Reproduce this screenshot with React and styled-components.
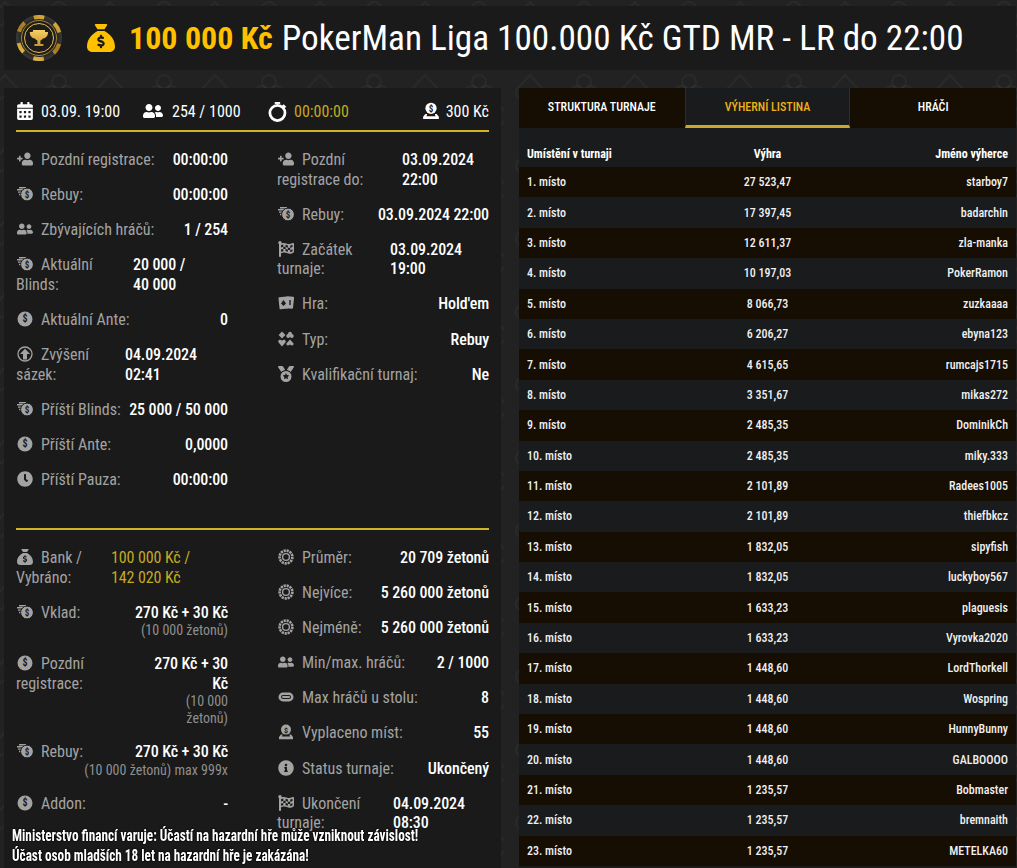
import styled, { createGlobalStyle } from 'styled-components'
import {
  FaCalendarAlt,
  FaClock,
  FaFlagCheckered,
  FaInfoCircle,
  FaUserFriends,
  FaUserPlus,
} from 'react-icons/fa'
import { FaSackDollar, FaMedal } from 'react-icons/fa6'

const suitPattern = `url("data:image/svg+xml,%3Csvg xmlns='http://www.w3.org/2000/svg' width='105' height='73' viewBox='0 0 105 73'%3E%3Cg fill='none' stroke='%23ffffff' stroke-opacity='.03' stroke-width='2'%3E%3Cpath d='M13 16 L26 2 L39 16 C44 26 31 29 26 22 C21 29 8 26 13 16Z'/%3E%3Ccircle cx='80' cy='9' r='7'/%3E%3Ccircle cx='73' cy='20' r='7'/%3E%3Ccircle cx='87' cy='20' r='7'/%3E%3Cpath d='M32 44 L45 60 L58 44 C58 34 49 34 45 41 C41 34 32 34 32 44Z'/%3E%3Cpath d='M98 30 L110 43 L98 56 L86 43Z'/%3E%3C/g%3E%3C/svg%3E")`

const GlobalStyle = createGlobalStyle`
  html, body {
    margin: 0;
    height: 100%;
    overflow: hidden;
  }
  body {
    background-color: #222222;
    background-image: ${suitPattern};
    background-position: -21px 0;
    font-family: 'Roboto Condensed', 'Liberation Sans Narrow', Roboto, sans-serif;
    font-stretch: 75%;
    color: #fff;
  }
`

const Page = styled.div`
  padding: 6px 1px 0 4px;
  height: 868px;
  box-sizing: border-box;
`

const Header = styled.header`
  display: flex;
  align-items: center;
  height: 64px;
  background: #1a1a1a;
  padding-left: 12px;
  margin-bottom: 18px;
`

const Logo = styled.svg`
  width: 46px;
  height: 46px;
  flex: none;
  margin-right: 25px;
`

const Bag = styled(FaSackDollar)`
  width: 28px;
  height: 28px;
  color: #ffc000;
  margin-right: 14px;
  flex: none;
`

const Amount = styled.span`
  font-size: 32px;
  font-weight: 700;
  color: #ffc000;
  margin-right: 9px;
  white-space: nowrap;
`

const Title = styled.h1`
  margin: 0;
  font-size: 35.2px;
  font-weight: 400;
  white-space: nowrap;
`

const Columns = styled.div`
  display: grid;
  grid-template-columns: 497px 497px;
  column-gap: 18px;
  align-items: start;
`

const Panel = styled.section`
  background: #1a1a1a;
  padding: 0 12px 0 12px;
  height: 780px;
  overflow: hidden;
`

const StatBar = styled.div`
  display: flex;
  align-items: center;
  height: 38px;
  padding-top: 4px;
  border-bottom: 2px solid #d1b527;
  font-size: 16px;
  margin-bottom: 18px;
`

const Stat = styled.div`
  display: flex;
  align-items: center;
  gap: ${(p) => p.$gap || 7}px;
  width: ${(p) => p.$width || 'auto'};
  margin-left: ${(p) => (p.$push ? 'auto' : 0)};
  color: ${(p) => (p.$gold ? '#c4ab22' : '#fff')};
  white-space: nowrap;
  svg {
    color: #fff;
    flex: none;
  }
`

const InfoGrid = styled.div`
  display: grid;
  grid-template-columns: 212px 212px;
  column-gap: 49px;
  height: ${(p) => p.$height}px;
  align-content: start;
  ${(p) => (p.$rule ? 'border-bottom: 2px solid #d1b527; margin-bottom: 18px;' : '')}
`

const InfoColumn = styled.div`
  display: flex;
  flex-direction: column;
`

const Row = styled.div`
  display: flex;
  justify-content: space-between;
  font-size: 16px;
  line-height: 19.6px;
  margin-bottom: 15.5px;
`

const Label = styled.div`
  color: #a3a3a3;
  flex: ${(p) => (p.$width ? '1 1 0' : 'none')};
  svg {
    width: 16px;
    height: 16px;
    margin: 0 8px -2px 1px;
    color: #a3a3a3;
  }
`

const Value = styled.div`
  color: ${(p) => (p.$gold ? '#c4ab22' : '#fff')};
  text-align: ${(p) => (p.$left ? 'left' : 'right')};
  font-weight: ${(p) => (p.$gold ? 400 : 500)};
  letter-spacing: -0.1px;
  width: ${(p) => (p.$width ? `${p.$width}px` : 'auto')};
  flex: none;
`

const Note = styled.div`
  font-size: 14px;
  line-height: 16.5px;
  font-weight: 400;
  letter-spacing: 0;
  color: #8f8f8f;
`

const Warning = styled.div`
  position: fixed;
  left: 12px;
  bottom: 0;
  font-size: 16px;
  line-height: 20px;
  font-weight: 700;
  color: #fff;
  padding-bottom: 2px;
  text-shadow: 0 0 2px #000, 0 0 2px #000;
  white-space: nowrap;
  transform: scaleX(0.827);
  transform-origin: left;
`

const Tabs = styled.nav`
  display: grid;
  grid-template-columns: repeat(3, 1fr);
  height: 40px;
`

const Tab = styled.div`
  display: flex;
  align-items: center;
  justify-content: center;
  font-size: 12px;
  font-weight: 500;
  box-sizing: border-box;
  background: ${(p) => (p.$active ? '#1a1b1c' : '#160e03')};
  color: ${(p) => (p.$active ? '#ecb21c' : '#fff')};
  border-bottom: 3px solid ${(p) => (p.$active ? '#c9a92a' : 'transparent')};
  border-left: 1px solid ${(p) => (p.$active ? '#2c2c2c' : 'transparent')};
  border-right: 1px solid ${(p) => (p.$active ? '#2c2c2c' : 'transparent')};
`

const Results = styled.div`
  background: #1a1b1c;
  height: 740px;
  overflow: hidden;
  padding-top: 14px;
  box-sizing: border-box;
`

const TableRow = styled.div`
  display: grid;
  grid-template-columns: 1fr 1fr 1fr;
  align-items: center;
  box-sizing: border-box;
  height: ${(p) => (p.$head ? '25px' : '30.4px')};
  padding: 0 8px ${(p) => (p.$head ? '2px' : '0')};
  font-size: 12px;
  font-weight: ${(p) => (p.$head ? 700 : 500)};
  color: ${(p) => (p.$head ? '#fff' : '#f0f0f0')};
  background: ${(p) => (p.$shade ? '#160e03' : 'transparent')};
`

const Cell = styled.div`
  text-align: ${(p) => p.$align || 'left'};
`

function Coins(props) {
  return (
    <svg viewBox="0 0 16 16" {...props}>
      <g fill="currentColor">
        <path d="M0 3h6v1.4H0zM1 5.4h4v1.4H1zM2 7.8h3v1.4H2zM2 1h7v1.4H2z" />
        <circle cx="10" cy="8.5" r="6.4" stroke="#1a1a1a" strokeWidth="1" />
      </g>
      <text x="10" y="11.6" fontSize="9" fontWeight="700" textAnchor="middle" fill="#1a1a1a">
        $
      </text>
    </svg>
  )
}

function Dollar(props) {
  return (
    <svg viewBox="0 0 16 16" {...props}>
      <circle cx="8" cy="8" r="7.5" fill="currentColor" />
      <text x="8" y="11.4" fontSize="10" fontWeight="700" textAnchor="middle" fill="#1a1a1a">
        $
      </text>
    </svg>
  )
}

function RaiseUp(props) {
  return (
    <svg viewBox="0 0 16 16" {...props}>
      <circle cx="8" cy="8" r="7" fill="none" stroke="currentColor" strokeWidth="1.3" />
      <path d="M8 2.8 13 8H10v5.4H6V8H3z" fill="currentColor" />
    </svg>
  )
}

function Cards(props) {
  return (
    <svg viewBox="0 0 16 16" {...props}>
      <rect x="1" y="2" width="9" height="12" rx="1" fill="currentColor" transform="rotate(-6 5 8)" />
      <rect x="8" y="1.5" width="7.5" height="12" rx="1" fill="currentColor" transform="rotate(6 12 8)" />
      <path d="M5.5 5 8 8.5 5.5 11 3 8.5z" fill="#1a1a1a" />
      <path d="M12 5v5" stroke="#1a1a1a" strokeWidth="1.4" />
    </svg>
  )
}

function Suits(props) {
  return (
    <svg viewBox="0 0 16 16" {...props}>
      <g fill="currentColor">
        <path d="M4 0.5 7.4 4 4 7.5 0.6 4z" />
        <circle cx="12" cy="2.6" r="1.9" />
        <circle cx="10.2" cy="5" r="1.9" />
        <circle cx="13.8" cy="5" r="1.9" />
        <path d="M4 15.4 0.4 11.2C-.4 9 2.6 7.8 4 9.8 5.4 7.8 8.4 9 7.6 11.2z" />
        <path d="M12 8.4 15.6 12.6C16 14.6 13.4 15 12 13.4 10.6 15 8 14.6 8.4 12.6z" />
      </g>
    </svg>
  )
}

function Chip(props) {
  return (
    <svg viewBox="0 0 16 16" {...props}>
      <circle cx="8" cy="8" r="6.4" fill="none" stroke="currentColor" strokeWidth="2.6" strokeDasharray="2.2 .8" />
      <circle cx="8" cy="8" r="3.4" fill="none" stroke="currentColor" strokeWidth="1.4" />
    </svg>
  )
}

function PokerTable(props) {
  return (
    <svg viewBox="0 0 16 16" {...props}>
      <rect x=".5" y="3.6" width="15" height="8.8" rx="4.4" fill="currentColor" />
      <rect x="3" y="6" width="10" height="4" rx="2" fill="#1a1a1a" />
      <rect x="4" y="7" width="8" height="2" rx="1" fill="currentColor" />
    </svg>
  )
}

function Payout(props) {
  return (
    <svg viewBox="0 0 16 16" {...props}>
      <circle cx="8" cy="5.6" r="5" fill="currentColor" />
      <text x="8" y="8.6" fontSize="8" fontWeight="700" textAnchor="middle" fill="#1a1a1a">
        $
      </text>
      <path d="M3 10.6h1.6L4 12.6h8l-.6-2H13l2 2.4v2.2H1V13z" fill="currentColor" />
    </svg>
  )
}

function Stopwatch(props) {
  return (
    <svg viewBox="0 0 20 20" {...props}>
      <circle cx="9" cy="11.4" r="7.2" fill="none" stroke="currentColor" strokeWidth="2.6" />
      <path d="M6.4 1h5.2v1.8H6.4z" fill="currentColor" />
      <path d="m14.8 3 2.6 2.4-1.6 1.6-2.5-2.4z" fill="currentColor" />
    </svg>
  )
}

function ChipLogo() {
  return (
    <Logo viewBox="0 0 46 46">
      <defs>
        <linearGradient id="gold" x1="0" y1="0" x2="1" y2="1">
          <stop offset="0" stopColor="#f4cf5a" />
          <stop offset=".5" stopColor="#a8781c" />
          <stop offset="1" stopColor="#e8bd48" />
        </linearGradient>
        <linearGradient id="cup" x1="0" y1="0" x2="0" y2="1">
          <stop offset="0" stopColor="#f6cf62" />
          <stop offset="1" stopColor="#c9962e" />
        </linearGradient>
        <radialGradient id="felt">
          <stop offset="0" stopColor="#1a1a1a" />
          <stop offset=".7" stopColor="#1f1d1a" />
          <stop offset="1" stopColor="#3a3a3a" />
        </radialGradient>
      </defs>
      <circle cx="23" cy="23" r="23" fill="url(#felt)" />
      <circle
        cx="23"
        cy="23"
        r="21"
        fill="none"
        stroke="url(#gold)"
        strokeWidth="4"
        strokeDasharray="10.5 11.49"
        transform="rotate(-104.3 23 23)"
      />
      <circle cx="23" cy="23" r="17.5" fill="none" stroke="#a8842e" strokeWidth="1" />
      <circle cx="23" cy="23" r="14.5" fill="none" stroke="#e2bc5a" strokeWidth="1" />
      <path
        d="M17 15h12v2h3c0 4-2 6-5 6.6-.7 1-1.6 1.6-2.6 1.8V29h3v2h-9v-2h3v-3.6c-1-.2-1.9-.8-2.6-1.8-3-.6-5-2.6-5-6.6h3z"
        fill="url(#cup)"
      />
    </Logo>
  )
}

const leftRows = [
  { icon: FaUserPlus, flip: true, label: 'Pozdní registrace:', value: '00:00:00' },
  { icon: Coins, label: 'Rebuy:', value: '00:00:00' },
  { icon: FaUserFriends, label: 'Zbývajících hráčů:', value: '1 / 254' },
  { icon: Coins, label: 'Aktuální Blinds:', value: '20\u00a0000 / 40\u00a0000', wrap: 95 },
  { icon: Dollar, label: 'Aktuální Ante:', value: '0' },
  { icon: RaiseUp, label: 'Zvýšení sázek:', value: '04.09.2024 02:41', wrap: 103 },
  { icon: Coins, label: 'Příští Blinds:', value: '25 000 / 50 000' },
  { icon: Dollar, label: 'Příští Ante:', value: '0,0000' },
  { icon: FaClock, label: 'Příští Pauza:', value: '00:00:00' },
]

const rightRows = [
  { icon: FaUserPlus, flip: true, label: 'Pozdní registrace do:', value: '03.09.2024 22:00', wrap: 87 },
  { icon: Coins, label: 'Rebuy:', value: '03.09.2024 22:00' },
  { icon: FaFlagCheckered, label: 'Začátek turnaje:', value: '03.09.2024 19:00', wrap: 99 },
  { icon: Cards, label: 'Hra:', value: "Hold'em" },
  { icon: Suits, label: 'Typ:', value: 'Rebuy' },
  { icon: FaMedal, label: 'Kvalifikační turnaj:', value: 'Ne' },
]

const bottomRight = [
  { icon: Chip, label: 'Průměr:', value: '20 709 žetonů' },
  { icon: Chip, label: 'Nejvíce:', value: '5 260 000 žetonů' },
  { icon: Chip, label: 'Nejméně:', value: '5 260 000 žetonů' },
  { icon: FaUserFriends, label: 'Min/max. hráčů:', value: '2 / 1000' },
  { icon: PokerTable, label: 'Max hráčů u stolu:', value: '8' },
  { icon: Payout, label: 'Vyplaceno míst:', value: '55' },
  { icon: FaInfoCircle, label: 'Status turnaje:', value: 'Ukončený' },
  { icon: FaFlagCheckered, label: 'Ukončení turnaje:', value: '04.09.2024 08:30', wrap: 96 },
]

const winners = [
  ['27 523,47', 'starboy7'],
  ['17 397,45', 'badarchin'],
  ['12 611,37', 'zla-manka'],
  ['10 197,03', 'PokerRamon'],
  ['8 066,73', 'zuzkaaaa'],
  ['6 206,27', 'ebyna123'],
  ['4 615,65', 'rumcajs1715'],
  ['3 351,67', 'mikas272'],
  ['2 485,35', 'DominikCh'],
  ['2 485,35', 'miky.333'],
  ['2 101,89', 'Radees1005'],
  ['2 101,89', 'thiefbkcz'],
  ['1 832,05', 'sipyfish'],
  ['1 832,05', 'luckyboy567'],
  ['1 633,23', 'plaguesis'],
  ['1 633,23', 'Vyrovka2020'],
  ['1 448,60', 'LordThorkell'],
  ['1 448,60', 'Wospring'],
  ['1 448,60', 'HunnyBunny'],
  ['1 448,60', 'GALBOOOO'],
  ['1 235,57', 'Bobmaster'],
  ['1 235,57', 'bremnaith'],
  ['1 235,57', 'METELKA60'],
]

function InfoRow({ icon: Icon, flip, label, value, wrap }) {
  return (
    <Row>
      <Label $width={wrap}>
        <Icon style={flip ? { transform: 'scaleX(-1)' } : undefined} />
        {label}
      </Label>
      <Value $left={Boolean(wrap)} $width={wrap}>
        {value}
      </Value>
    </Row>
  )
}

function App() {
  return (
    <>
      <GlobalStyle />
      <Page>
        <Header>
          <ChipLogo />
          <Bag />
          <Amount>100 000 Kč</Amount>
          <Title>PokerMan Liga 100.000 Kč GTD MR - LR do 22:00</Title>
        </Header>
        <Columns>
          <Panel>
            <StatBar>
              <Stat $width="127px">
                <FaCalendarAlt size={18} />
                03.09. 19:00
              </Stat>
              <Stat $width="125px" $gap={9}>
                <FaUserFriends size={20} />
                254 / 1000
              </Stat>
              <Stat $gold $gap={5}>
                <Stopwatch width={21} height={21} />
                00:00:00
              </Stat>
              <Stat $push $gap={6}>
                <Payout width={18} height={18} />
                300 Kč
              </Stat>
            </StatBar>
            <InfoGrid $height={378} $rule>
              <InfoColumn>
                {leftRows.map((row) => (
                  <InfoRow key={row.label} {...row} />
                ))}
              </InfoColumn>
              <InfoColumn>
                {rightRows.map((row) => (
                  <InfoRow key={row.label} {...row} />
                ))}
              </InfoColumn>
            </InfoGrid>
            <InfoGrid $height={360}>
              <InfoColumn>
                <Row>
                  <Label $width={117}>
                    <FaSackDollar />
                    Bank / Vybráno:
                  </Label>
                  <Value $left $gold $width={117}>
                    100&nbsp;000&nbsp;Kč / 142&nbsp;020&nbsp;Kč
                  </Value>
                </Row>
                <Row>
                  <Label>
                    <Coins />
                    Vklad:
                  </Label>
                  <Value>
                    270 Kč + 30 Kč
                    <Note>(10 000 žetonů)</Note>
                  </Value>
                </Row>
                <Row>
                  <Label $width={75}>
                    <Dollar />
                    Pozdní registrace:
                  </Label>
                  <Value $width={75}>
                    270 Kč + 30 Kč
                    <Note>(10 000 žetonů)</Note>
                  </Value>
                </Row>
                <Row>
                  <Label>
                    <Coins />
                    Rebuy:
                  </Label>
                  <Value>
                    270 Kč + 30 Kč
                    <Note>(10 000 žetonů) max 999x</Note>
                  </Value>
                </Row>
                <Row>
                  <Label>
                    <Dollar />
                    Addon:
                  </Label>
                  <Value>-</Value>
                </Row>
              </InfoColumn>
              <InfoColumn>
                {bottomRight.map((row) => (
                  <InfoRow key={row.label} {...row} />
                ))}
              </InfoColumn>
            </InfoGrid>
          </Panel>
          <div>
            <Tabs>
              <Tab>STRUKTURA TURNAJE</Tab>
              <Tab $active>VÝHERNÍ LISTINA</Tab>
              <Tab>HRÁČI</Tab>
            </Tabs>
            <Results>
              <TableRow $head>
                <Cell>Umístění v turnaji</Cell>
                <Cell $align="center">Výhra</Cell>
                <Cell $align="right">Jméno výherce</Cell>
              </TableRow>
              {winners.map(([prize, name], i) => (
                <TableRow key={name} $shade={i % 2 === 0}>
                  <Cell>{i + 1}. místo</Cell>
                  <Cell $align="center">{prize}</Cell>
                  <Cell $align="right">{name}</Cell>
                </TableRow>
              ))}
            </Results>
          </div>
        </Columns>
      </Page>
      <Warning>
        Ministerstvo financí varuje: Účastí na hazardní hře může vzniknout závislost!
        <br />
        Účast osob mladších 18 let na hazardní hře je zakázána!
      </Warning>
    </>
  )
}

export default App
